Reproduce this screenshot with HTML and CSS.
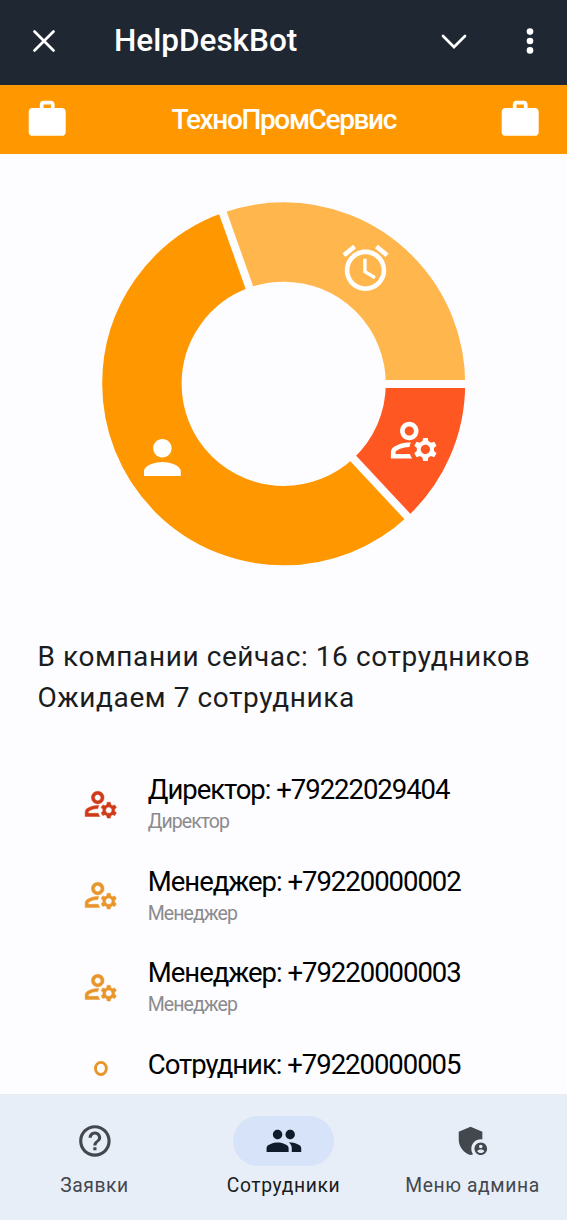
FILE: index.html
```
<!DOCTYPE html>
<html lang="ru">
<head>
<meta charset="utf-8">
<title>HelpDeskBot</title>
<link rel="stylesheet" href="styles.css">
</head>
<body>
<svg class="defs" aria-hidden="true">
  <symbol id="work" viewBox="0 0 24 24"><path d="M20 6h-4V4c0-1.11-.89-2-2-2h-4c-1.11 0-2 .89-2 2v2H4c-1.11 0-1.99.89-1.99 2L2 19c0 1.11.89 2 2 2h16c1.11 0 2-.89 2-2V8c0-1.11-.89-2-2-2zm-6 0h-4V4h4v2z"/></symbol>
  <symbol id="manage" viewBox="0 0 24 24"><path d="M4 18v-.65c0-.34.16-.66.41-.81C6.1 15.53 8.03 15 10 15c.03 0 .05 0 .08.01.1-.7.3-1.37.59-1.98-.22-.02-.44-.03-.67-.03-2.42 0-4.68.67-6.61 1.82-.88.52-1.39 1.5-1.39 2.53V20h9.26c-.42-.6-.75-1.28-.97-2H4zM10 12c2.21 0 4-1.79 4-4s-1.79-4-4-4-4 1.79-4 4 1.79 4 4 4zm0-6c1.1 0 2 .9 2 2s-.9 2-2 2-2-.9-2-2 .9-2 2-2zM20.75 16c0-.22-.03-.42-.06-.63l1.14-1.01-1-1.73-1.45.49c-.32-.27-.68-.48-1.08-.63L18 11h-2l-.3 1.49c-.4.15-.76.36-1.08.63l-1.45-.49-1 1.73 1.14 1.01c-.03.21-.06.41-.06.63s.03.42.06.63l-1.14 1.01 1 1.73 1.45-.49c.32.27.68.48 1.08.63L16 21h2l.3-1.49c.4-.15.76-.36 1.08-.63l1.45.49 1-1.73-1.14-1.01c.03-.21.06-.41.06-.63zM17 18c-1.1 0-2-.9-2-2s.9-2 2-2 2 .9 2 2-.9 2-2 2z"/></symbol>
  <symbol id="alarm" viewBox="0 0 24 24"><path d="M22 5.72l-4.6-3.86-1.29 1.53 4.6 3.86L22 5.72zM7.88 3.39L6.6 1.86 2 5.71l1.29 1.53 4.59-3.85zM12.5 8H11v6l4.75 2.85.75-1.23-4-2.37V8zM12 4c-4.97 0-9 4.03-9 9s4.02 9 9 9c4.97 0 9-4.03 9-9s-4.03-9-9-9zm0 16c-3.87 0-7-3.13-7-7s3.13-7 7-7 7 3.13 7 7-3.13 7-7 7z"/></symbol>
  <symbol id="person" viewBox="0 0 24 24"><path d="M12 12c2.21 0 4-1.79 4-4s-1.79-4-4-4-4 1.79-4 4 1.79 4 4 4zm0 2c-2.67 0-8 1.34-8 4v2h16v-2c0-2.66-5.33-4-8-4z"/></symbol>
</svg>

<header class="appbar">
  <svg class="close" viewBox="0 0 24 24"><path d="M2.5 2.5L21.5 21.5M21.5 2.5L2.5 21.5"/></svg>
  <h1 class="appbar-title">HelpDeskBot</h1>
  <svg class="chevron" viewBox="0 0 26 16"><path d="M2 3L13 14L24 3"/></svg>
  <svg class="more" viewBox="0 0 8 28"><circle cx="4" cy="4.6" r="3.3"/><circle cx="4" cy="14" r="3.3"/><circle cx="4" cy="23.4" r="3.3"/></svg>
</header>

<div class="company">
  <svg class="work"><use href="#work"/></svg>
  <h2 class="company-name">ТехноПромСервис</h2>
  <svg class="work"><use href="#work"/></svg>
</div>

<main class="content">
  <svg class="chart" viewBox="0 0 364 364">
    <g class="ring">
      <circle class="seg admins" cx="181.7" cy="181.8" r="141.8" pathLength="23" stroke-dasharray="3 20"/>
      <circle class="seg staff" cx="181.7" cy="181.8" r="141.8" pathLength="23" stroke-dasharray="13 10" stroke-dashoffset="-3"/>
      <circle class="seg waiting" cx="181.7" cy="181.8" r="141.8" pathLength="23" stroke-dasharray="7 16" stroke-dashoffset="-16"/>
    </g>
    <g class="gaps">
      <path d="M181.7 182H366"/>
      <path d="M181.7 182H366" transform="rotate(46.96 181.7 182)"/>
      <path d="M181.7 182H366" transform="rotate(-109.57 181.7 182)"/>
    </g>
    <g class="marks">
      <use href="#alarm" x="235.9" y="38.4" width="55.2" height="55.2"/>
      <use href="#manage" x="284.3" y="210.6" width="55.2" height="55.2"/>
      <use href="#person" x="32.8" y="227.9" width="55.2" height="55.2"/>
    </g>
  </svg>

  <p class="summary">В компании сейчас: 16 сотрудников<br>Ожидаем 7 сотрудника</p>

  <ul class="people">
    <li class="person">
      <svg class="role director"><use href="#manage"/></svg>
      <div><div class="name">Директор: +79222029404</div><div class="post">Директор</div></div>
    </li>
    <li class="person">
      <svg class="role"><use href="#manage"/></svg>
      <div><div class="name">Менеджер: +79220000002</div><div class="post">Менеджер</div></div>
    </li>
    <li class="person">
      <svg class="role"><use href="#manage"/></svg>
      <div><div class="name">Менеджер: +79220000003</div><div class="post">Менеджер</div></div>
    </li>
    <li class="person">
      <svg class="role" viewBox="0 0 38 38"><ellipse class="head" cx="19" cy="9.5" rx="5.5" ry="6.1"/></svg>
      <div><div class="name">Сотрудник: +79220000005</div></div>
    </li>
  </ul>
</main>

<nav class="tabs">
  <a class="tab">
    <span class="pill"><svg viewBox="0 0 24 24"><path d="M11 18h2v-2h-2v2zm1-16C6.48 2 2 6.48 2 12s4.48 10 10 10 10-4.48 10-10S17.52 2 12 2zm0 18c-4.41 0-8-3.59-8-8s3.59-8 8-8 8 3.59 8 8-3.59 8-8 8zm0-14c-2.21 0-4 1.79-4 4h2c0-1.1.9-2 2-2s2 .9 2 2c0 2-3 1.75-3 5h2c0-2.25 3-2.5 3-5 0-2.21-1.79-4-4-4z"/></svg></span>
    <span>Заявки</span>
  </a>
  <a class="tab active">
    <span class="pill"><svg viewBox="0 0 24 24"><path d="M16 11c1.66 0 2.99-1.34 2.99-3S17.66 5 16 5s-3 1.34-3 3 1.34 3 3 3zm-8 0c1.66 0 2.99-1.34 2.99-3S9.66 5 8 5 5 6.34 5 8s1.34 3 3 3zm0 2c-2.33 0-7 1.17-7 3.5V19h14v-2.5c0-2.33-4.67-3.5-7-3.5zm8 0c-.29 0-.62.02-.97.05 1.16.84 1.97 1.97 1.97 3.45V19h6v-2.5c0-2.33-4.67-3.5-7-3.5z"/></svg></span>
    <span>Сотрудники</span>
  </a>
  <a class="tab">
    <span class="pill"><svg viewBox="0 0 24 24"><path fill-rule="evenodd" d="M17 11c.34 0 .67.04 1 .09V6.27L10.5 3 3 6.27v4.91c0 4.54 3.2 8.79 7.5 9.82.55-.13 1.08-.32 1.6-.55-.69-.98-1.1-2.17-1.1-3.45 0-3.31 2.69-6 6-6zM17 13c-2.21 0-4 1.79-4 4s1.79 4 4 4 4-1.79 4-4-1.79-4-4-4zm0 1.38c.62 0 1.12.51 1.12 1.12s-.51 1.12-1.12 1.12-1.12-.51-1.12-1.12.5-1.12 1.12-1.12zm0 5.37c-.93 0-1.74-.46-2.24-1.17.05-.72 1.51-1.08 2.24-1.08s2.19.36 2.24 1.08c-.5.71-1.31 1.17-2.24 1.17z"/></svg></span>
    <span>Меню админа</span>
  </a>
</nav>
</body>
</html>
```
FILE: styles.css
```
* { box-sizing: border-box; }
body {
  margin: 0;
  height: 1220px;
  display: flex;
  flex-direction: column;
  overflow: hidden;
  background: #fdfcff;
  font-family: Roboto, "Noto Sans", sans-serif;
}
svg { display: block; flex: none; }
.defs { width: 0; height: 0; position: absolute; }
h1, h2, p, ul { margin: 0; padding: 0; }

.appbar {
  flex: none;
  height: 85px;
  padding: 0 33px 3px 31.5px;
  display: flex;
  align-items: center;
  background: #1f2733;
  color: #fff;
}
.close { width: 24px; height: 24px; margin-right: 58.5px; }
.close, .chevron { fill: none; stroke: #fff; stroke-width: 2.7; stroke-linecap: round; }
.appbar-title { flex: 1; font-size: 31.5px; font-weight: 500; line-height: 42px; }
.chevron { width: 26px; height: 16px; margin-right: 59px; }
.more { width: 8px; height: 28px; fill: #fff; }

.company {
  flex: none;
  height: 69px;
  padding: 0 24.5px 0 25px;
  display: flex;
  align-items: center;
  justify-content: space-between;
  background: #ff9800;
  color: #fff;
}
.work { width: 44.4px; height: 44.4px; fill: #fff; }
.company-name { font-size: 28px; font-weight: 500; line-height: 34px; letter-spacing: -1.35px; }

.content {
  flex: none;
  height: 924px;
  overflow: hidden;
  padding-top: 48px;
}
.chart { width: 364px; height: 364px; margin: 0 auto; }
.seg { fill: none; stroke-width: 79.4; }
.admins { stroke: #ff5722; }
.staff { stroke: #ff9800; }
.waiting { stroke: #ffb74d; }
.gaps { stroke: #fdfcff; stroke-width: 8; }
.marks { fill: #fff; }

.summary {
  margin: 70px 0 0 37.5px;
  font-size: 28px;
  line-height: 41px;
  letter-spacing: 0.58px;
  color: #1a1c1e;
  white-space: nowrap;
}
.people { list-style: none; margin-top: 53px; padding-left: 82px; }
.person { display: flex; height: 91.5px; gap: 28px; padding-top: 2px; white-space: nowrap; }
.role {
  width: 37.8px;
  height: 37.8px;
  margin-top: 11.5px;
  fill: #e8952a;
  stroke: #e8952a;
  stroke-width: 0.3;
}
.role.director { fill: #cf3a18; stroke: #cf3a18; }
.role .head { fill: none; stroke-width: 2.9; }
.name { font-size: 27.5px; line-height: 34px; letter-spacing: -1.03px; color: #000; }
.post { margin-top: 2px; font-size: 19.5px; line-height: 26px; letter-spacing: -0.95px; color: #8b8b8d; }

.tabs {
  flex: none;
  height: 126px;
  margin-top: 16px;
  padding-top: 19px;
  border-top: 3px solid #e9edf2;
  display: grid;
  grid-template-columns: repeat(3, 1fr);
  background: #e8eef7;
}
.tab {
  display: flex;
  flex-direction: column;
  align-items: center;
  font-size: 19.3px;
  line-height: 25px;
  letter-spacing: 0.6px;
  color: #43474e;
  fill: #43474e;
}
.pill {
  width: 101px;
  height: 50px;
  margin-bottom: 7px;
  border-radius: 25px;
  display: flex;
  align-items: center;
  justify-content: center;
}
.pill svg { width: 37.8px; height: 37.8px; }
.active { color: #1a1c1e; fill: #101c2b; }
.active .pill { background: #d7e3f8; }
```
